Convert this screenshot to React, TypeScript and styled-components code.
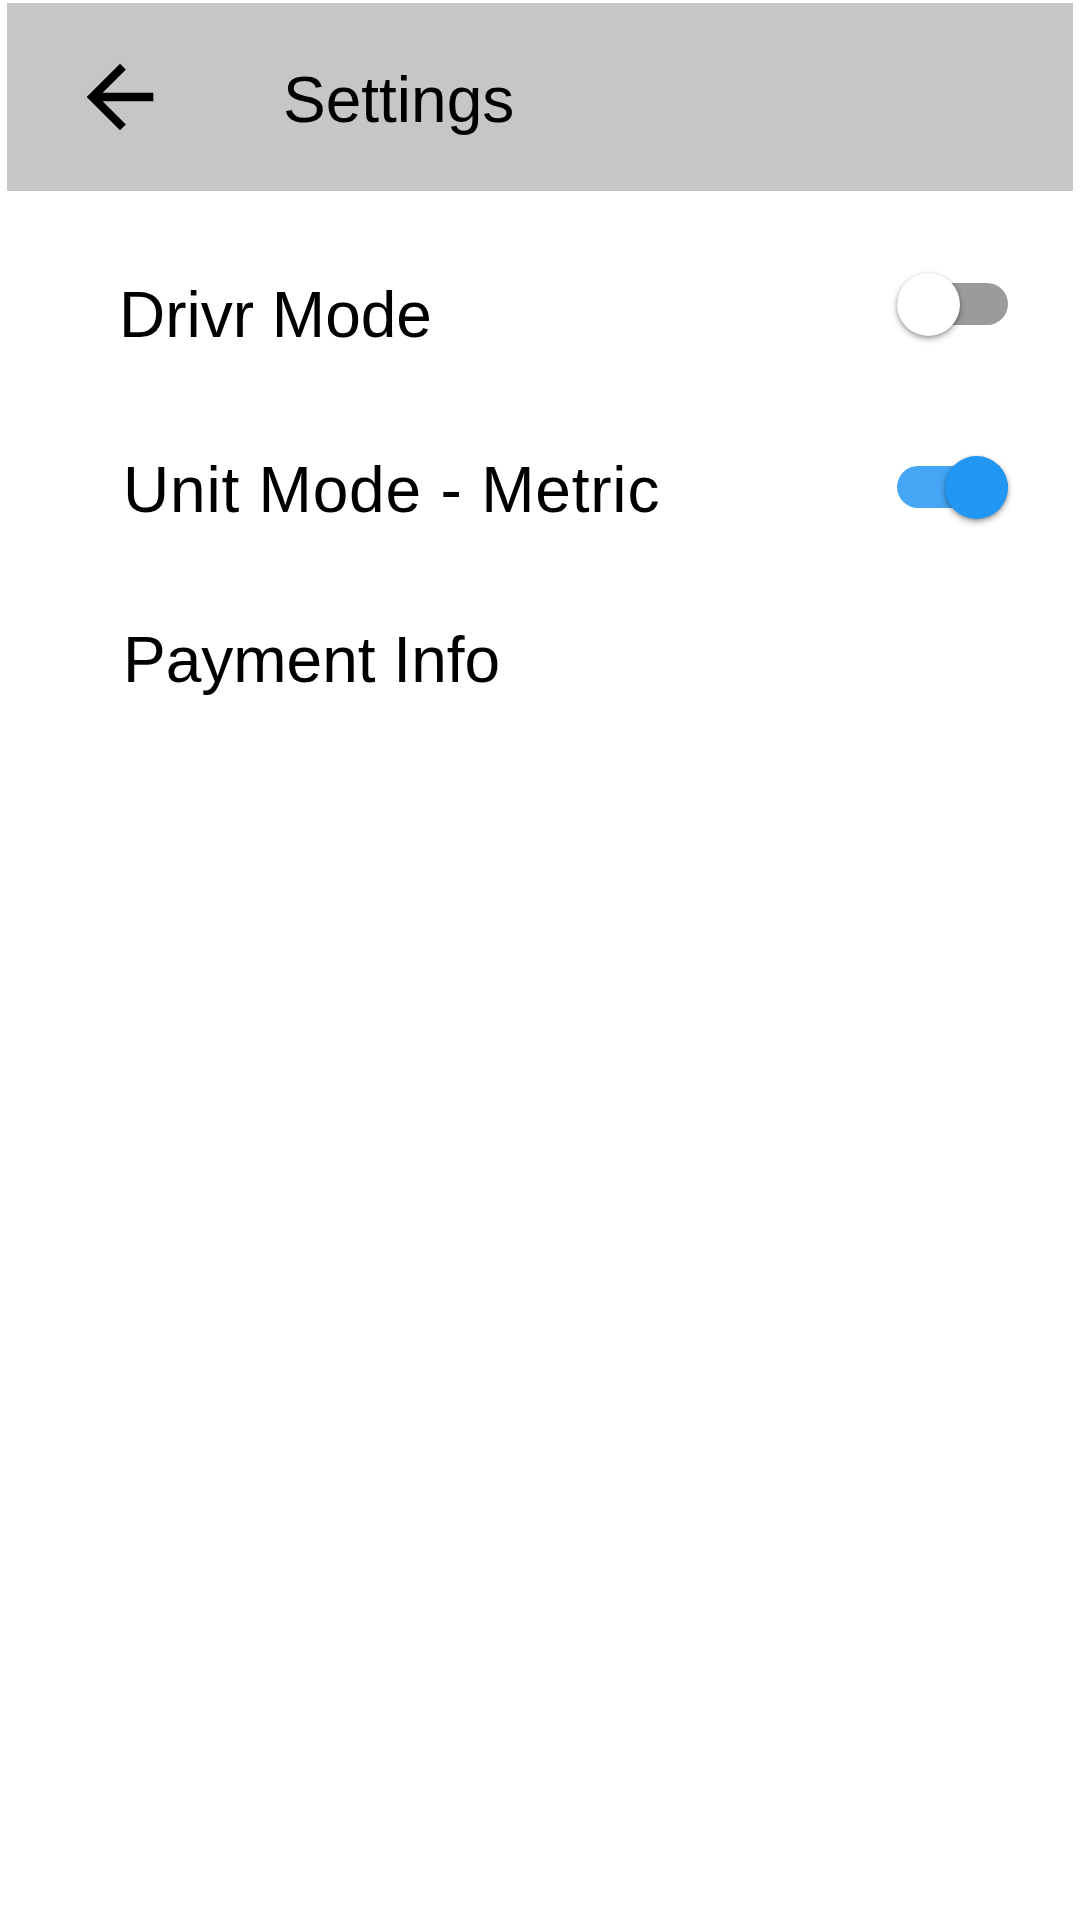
import React, { useState } from "react";
import styled, { createGlobalStyle } from "styled-components";

const GlobalStyle = createGlobalStyle`
  html, body {
    margin: 0;
    padding: 0;
    background: #ffffff;
  }
  body {
    font-family: "Liberation Sans", Arial, sans-serif;
    color: #000000;
  }
`;

const Screen = styled.div`
  width: 1080px;
  min-height: 1920px;
  box-sizing: border-box;
  padding: 3px 7px 0 7px;
  background: #ffffff;
  display: flex;
  flex-direction: column;
`;

const Header = styled.header`
  height: 188px;
  background: #c6c6c6;
  display: flex;
  align-items: center;
  padding-left: 63px;
  box-sizing: border-box;
`;

const BackButton = styled.button`
  width: 100px;
  height: 100px;
  padding: 0;
  margin: 0;
  border: none;
  background: transparent;
  display: flex;
  align-items: center;
  justify-content: center;
  cursor: pointer;
  svg {
    display: block;
  }
`;

const Title = styled.h1`
  margin: 0 0 0 113px;
  padding-top: 5px;
  font-family: "Liberation Sans", Arial, sans-serif;
  font-weight: 400;
  font-size: 64px;
  line-height: 74px;
  color: #000;
`;

const List = styled.div`
  display: flex;
  flex-direction: column;
`;

const Row = styled.div<{ $mt: number; $indent: number }>`
  height: 120px;
  margin-top: ${(p) => p.$mt}px;
  padding-left: ${(p) => p.$indent}px;
  padding-right: 65px;
  display: flex;
  align-items: center;
  justify-content: space-between;
`;

const Label = styled.span<{ $dy: number; $ls?: number }>`
  font-family: "Liberation Sans", Arial, sans-serif;
  font-size: 64px;
  line-height: 74px;
  padding-top: ${(p) => p.$dy}px;
  letter-spacing: ${(p) => p.$ls ?? 0}px;
  color: #000;
  white-space: nowrap;
`;

const Track = styled.button<{ $on: boolean }>`
  position: relative;
  width: 111px;
  height: 42px;
  border-radius: 21px;
  border: none;
  padding: 0;
  flex-shrink: 0;
  cursor: pointer;
  background: ${(p) => (p.$on ? "#45a6f5" : "#9b9b9b")};
`;

const Knob = styled.span<{ $on: boolean }>`
  position: absolute;
  top: -10.5px;
  left: ${(p) => (p.$on ? "48px" : "0px")};
  width: 63px;
  height: 63px;
  border-radius: 50%;
  background: ${(p) => (p.$on ? "#2196f3" : "#ffffff")};
  box-shadow: 0 3px 6px rgba(0, 0, 0, 0.32), 0 1px 3px rgba(0, 0, 0, 0.18);
`;

function Toggle({ on, onChange }: { on: boolean; onChange: () => void }) {
  return (
    <Track $on={on} onClick={onChange} aria-pressed={on}>
      <Knob $on={on} />
    </Track>
  );
}

function ArrowBack() {
  return (
    <svg width="100" height="100" viewBox="0 0 24 24" aria-hidden="true">
      <path
        fill="#000"
        d="M20 11H7.83l5.59-5.59L12 4l-8 8 8 8 1.41-1.41L7.83 13H20v-2z"
      />
    </svg>
  );
}

export default function App() {
  const [driver, setDriver] = useState(false);
  const [metric, setMetric] = useState(true);

  return (
    <>
      <GlobalStyle />
      <Screen>
        <Header>
          <BackButton aria-label="Back">
            <ArrowBack />
          </BackButton>
          <Title>Settings</Title>
        </Header>
        <List>
          <Row $mt={53} $indent={112}>
            <Label $dy={21}>Drivr Mode</Label>
            <Toggle on={driver} onChange={() => setDriver(!driver)} />
          </Row>
          <Row $mt={63} $indent={116}>
            <Label $dy={6} $ls={0.8}>
              Unit Mode - Metric
            </Label>
            <Toggle on={metric} onChange={() => setMetric(!metric)} />
          </Row>
          <Row $mt={53} $indent={116}>
            <Label $dy={0}>Payment Info</Label>
          </Row>
        </List>
      </Screen>
    </>
  );
}
